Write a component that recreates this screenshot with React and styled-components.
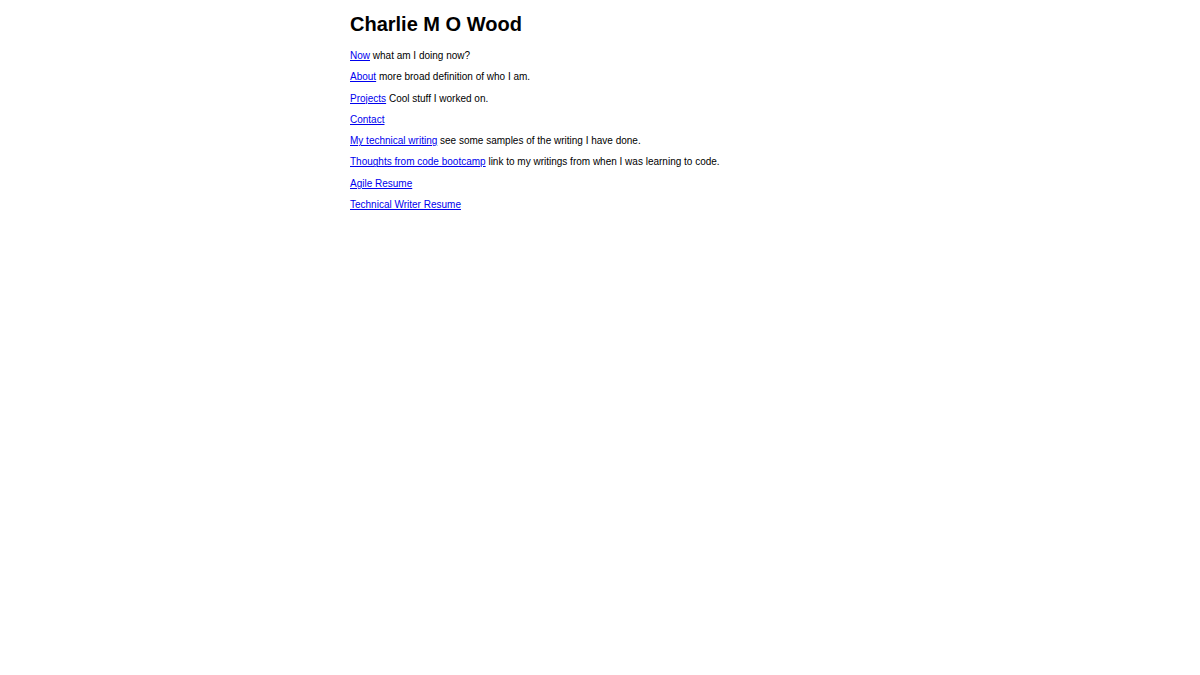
import React from "react"
import styled, { createGlobalStyle } from "styled-components"

const GlobalStyle = createGlobalStyle`
  html, body {
    margin: 0;
    padding: 0;
    background: #fff;
  }
  body {
    font-family: "Liberation Sans", Arial, sans-serif;
    color: #000;
  }
`

const Page = styled.main`
  width: 500px;
  margin: 0 auto;
  padding-top: 13px;
`

const Title = styled.h1`
  margin: 0 0 9px;
  font-size: 20px;
  font-weight: bold;
  line-height: 23px;
`

const LinkList = styled.ul`
  list-style: none;
  margin: 0;
  padding: 0;
`

const Item = styled.li`
  font-size: 10px;
  line-height: 21.3px;
`

const Link = styled.a`
  color: #0000ee;
  text-decoration: underline;
`

const links = [
  { label: "Now", note: "what am I doing now?" },
  { label: "About", note: "more broad definition of who I am." },
  { label: "Projects", note: "Cool stuff I worked on." },
  { label: "Contact" },
  { label: "My technical writing", note: "see some samples of the writing I have done." },
  { label: "Thoughts from code bootcamp", note: "link to my writings from when I was learning to code." },
  { label: "Agile Resume" },
  { label: "Technical Writer Resume" }
]

function App() {
  return (
    <>
      <GlobalStyle />
      <Page>
        <Title>Charlie M O Wood</Title>
        <LinkList>
          {links.map((link) => (
            <Item key={link.label}>
              <Link href="#">{link.label}</Link>
              {link.note && ` ${link.note}`}
            </Item>
          ))}
        </LinkList>
      </Page>
    </>
  )
}

export default App
